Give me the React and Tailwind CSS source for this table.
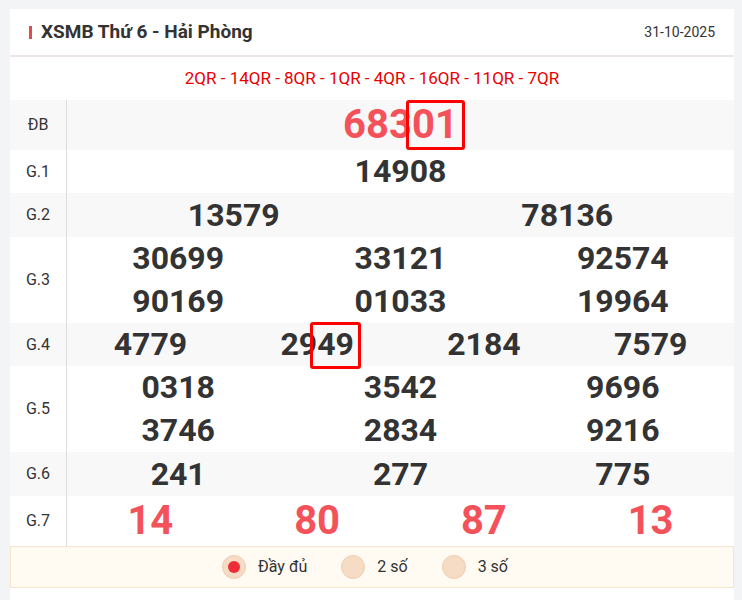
import React from "react";

function Hi({ children, cls }) {
  return (
    <span className="relative inline-block">
      {children}
      <span className={cls}></span>
    </span>
  );
}

function Row({ label, bg, children }) {
  return (
    <div className={"flex " + bg}>
      <div className="w-[57px] shrink-0 border-r border-[#dddddd] flex items-center justify-center text-[16px] text-[#333333]">
        {label}
      </div>
      <div className="flex-1">{children}</div>
    </div>
  );
}

function Line({ cols, items }) {
  return (
    <div className={cols + " grid h-[43px] items-center text-center text-[32px] font-bold leading-[43px] text-[#333333]"}>
      {items.map((it, i) => (
        <div key={i}>{it}</div>
      ))}
    </div>
  );
}

function Radio({ checked, label }) {
  return (
    <div className="flex items-center gap-3">
      <div className="w-6 h-6 rounded-full bg-[#f6dbc5] border border-[#efcdb2] flex items-center justify-center">
        {checked && <div className="w-3 h-3 rounded-full bg-[#ef2d38]"></div>}
      </div>
      <span className="text-[16px] text-[#333333]">{label}</span>
    </div>
  );
}

export default function App() {
  return (
    <div
      className="min-h-screen bg-[#f3f4f6] pt-[9px] pl-[10px] pr-[8px]"
      style={{ fontFamily: "Roboto, 'Liberation Sans', sans-serif" }}
    >
      <div className="bg-white w-[724px] min-h-[591px]">
        <div className="h-[48px] flex items-center justify-between pl-[19px] pr-[19px] border-b-2 border-[#ece6e9]">
          <div className="flex items-center gap-[9px]">
            <div className="w-[3px] h-[13px] bg-[#e5484d]"></div>
            <span className="text-[19px] font-bold text-[#333333]">XSMB Thứ 6 - Hải Phòng</span>
          </div>
          <span className="text-[14px] text-[#333333]">31-10-2025</span>
        </div>
        <div className="h-[43px] flex items-center justify-center text-[17px] text-[#e80000]">
          2QR - 14QR - 8QR - 1QR - 4QR - 16QR - 11QR - 7QR
        </div>

        <Row label="ĐB" bg="bg-[#f8f8f8]">
          <div className="h-[50px] text-center text-[40px] font-bold leading-[50px] text-[#f4525a]">
            683
            <Hi cls="absolute -left-[6px] -right-[7px] top-0 bottom-0 border-[3px] border-[#ff0000] rounded-[3px]">01</Hi>
          </div>
        </Row>
        <Row label="G.1" bg="bg-white">
          <Line cols="grid-cols-1" items={["14908"]} />
        </Row>
        <Row label="G.2" bg="bg-[#f8f8f8]">
          <div className="h-[44px] grid grid-cols-2 items-center text-center text-[32px] font-bold leading-[44px] text-[#333333]">
            <div>13579</div>
            <div>78136</div>
          </div>
        </Row>
        <Row label="G.3" bg="bg-white">
          <Line cols="grid-cols-3" items={["30699", "33121", "92574"]} />
          <Line cols="grid-cols-3" items={["90169", "01033", "19964"]} />
        </Row>
        <Row label="G.4" bg="bg-[#f8f8f8]">
          <Line
            cols="grid-cols-4"
            items={[
              "4779",
              <span key="a">
                29
                <Hi cls="absolute -left-[7px] -right-[7px] -top-px -bottom-[3px] border-[3px] border-[#ff0000] rounded-[3px]">49</Hi>
              </span>,
              "2184",
              "7579",
            ]}
          />
        </Row>
        <Row label="G.5" bg="bg-white">
          <Line cols="grid-cols-3" items={["0318", "3542", "9696"]} />
          <Line cols="grid-cols-3" items={["3746", "2834", "9216"]} />
        </Row>
        <Row label="G.6" bg="bg-[#f8f8f8]">
          <div className="h-[44px] grid grid-cols-3 items-center text-center text-[32px] font-bold leading-[44px] text-[#333333]">
            <div>241</div>
            <div>277</div>
            <div>775</div>
          </div>
        </Row>
        <Row label="G.7" bg="bg-white">
          <div className="h-[50px] grid grid-cols-4 items-center text-center text-[40px] font-bold leading-[50px] text-[#f4525a]">
            <div>14</div>
            <div>80</div>
            <div>87</div>
            <div>13</div>
          </div>
        </Row>

        <div className="h-[42px] bg-[#fffaf2] border border-[#f6e6cd] flex items-center justify-center gap-[34px] pr-[14px]">
          <Radio checked label="Đầy đủ" />
          <Radio label="2 số" />
          <Radio label="3 số" />
        </div>
      </div>
    </div>
  );
}
